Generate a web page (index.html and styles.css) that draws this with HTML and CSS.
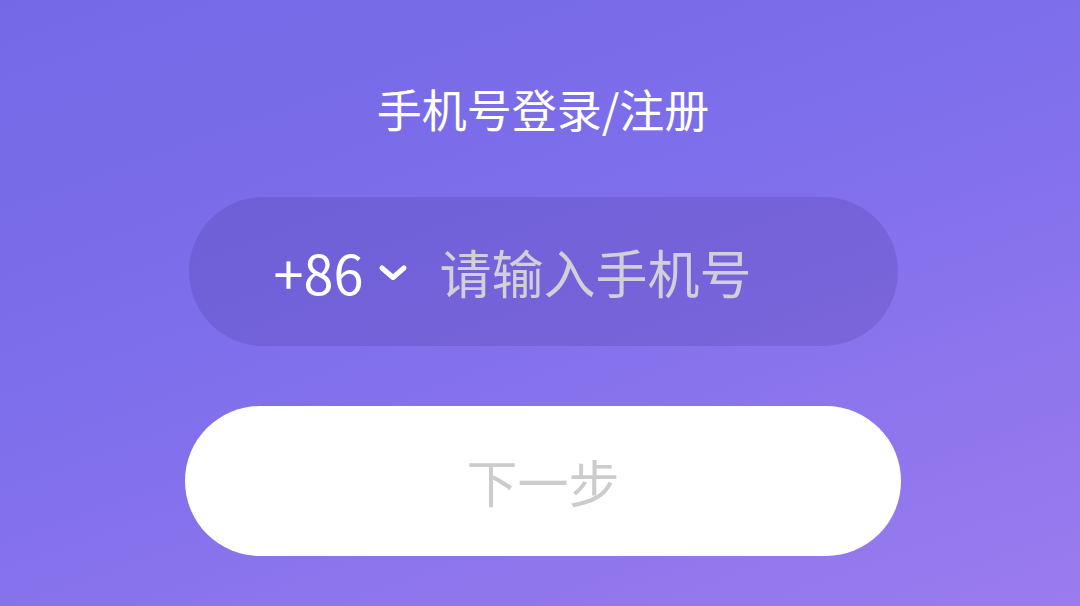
FILE: index.html
```html
<!DOCTYPE html>
<html lang="zh-CN">
  <head>
    <meta charset="UTF-8" />
    <meta name="viewport" content="width=device-width, initial-scale=1.0" />
    <title>手机号登录</title>
    <link rel="stylesheet" href="styles.css">
  </head>
  <body>
    <main class="login">
      <h1 class="title">手机号登录/注册</h1>
      <div class="phone-box">
        <span class="area">+86</span>
        <svg class="chevron" width="30" height="18" viewBox="0 0 30 18">
          <polyline points="4,4 15,13.5 26,4" fill="none" stroke="#fff" stroke-width="5" stroke-linecap="round" stroke-linejoin="round" />
        </svg>
        <input class="phone-input" type="tel" placeholder="请输入手机号" />
      </div>
      <button class="next-btn">下一步</button>
    </main>
  </body>
</html>
```

FILE: styles.css
```css
html, body {
  margin: 0;
  height: 100%;
}

body {
  font-family: "Noto Sans CJK SC", "Noto Sans", sans-serif;
  background: linear-gradient(160deg, #7369e7 0%, #7f6feb 45%, #9b7bef 100%);
  overflow: hidden;
}

.login {
  display: flex;
  flex-direction: column;
  align-items: center;
  padding: 77px 0 0 6px;
}

.title {
  margin: 0;
  height: 63px;
  line-height: 63px;
  font-size: 45px;
  font-weight: 400;
  color: #fff;
}

.phone-box {
  box-sizing: border-box;
  width: 709px;
  height: 149px;
  margin-top: 57px;
  padding-left: 85px;
  border-radius: 75px;
  background-color: rgba(60, 40, 140, 0.18);
  display: flex;
  align-items: center;
}

.area {
  font-size: 54px;
  color: #fff;
  line-height: 1;
}

.chevron {
  margin-left: 15px;
  margin-top: 2px;
}

.phone-input {
  flex: 1;
  min-width: 0;
  margin-left: 31px;
  border: none;
  outline: none;
  background: transparent;
  font-family: inherit;
  font-size: 52px;
  color: #fff;
  padding: 0;
}

.phone-input::placeholder {
  color: #d2cfd8;
}

.next-btn {
  width: 716px;
  height: 150px;
  margin-top: 60px;
  border: none;
  border-radius: 75px;
  background-color: #fff;
  font-family: inherit;
  font-size: 51px;
  color: #cccccc;
  cursor: pointer;
}
```
